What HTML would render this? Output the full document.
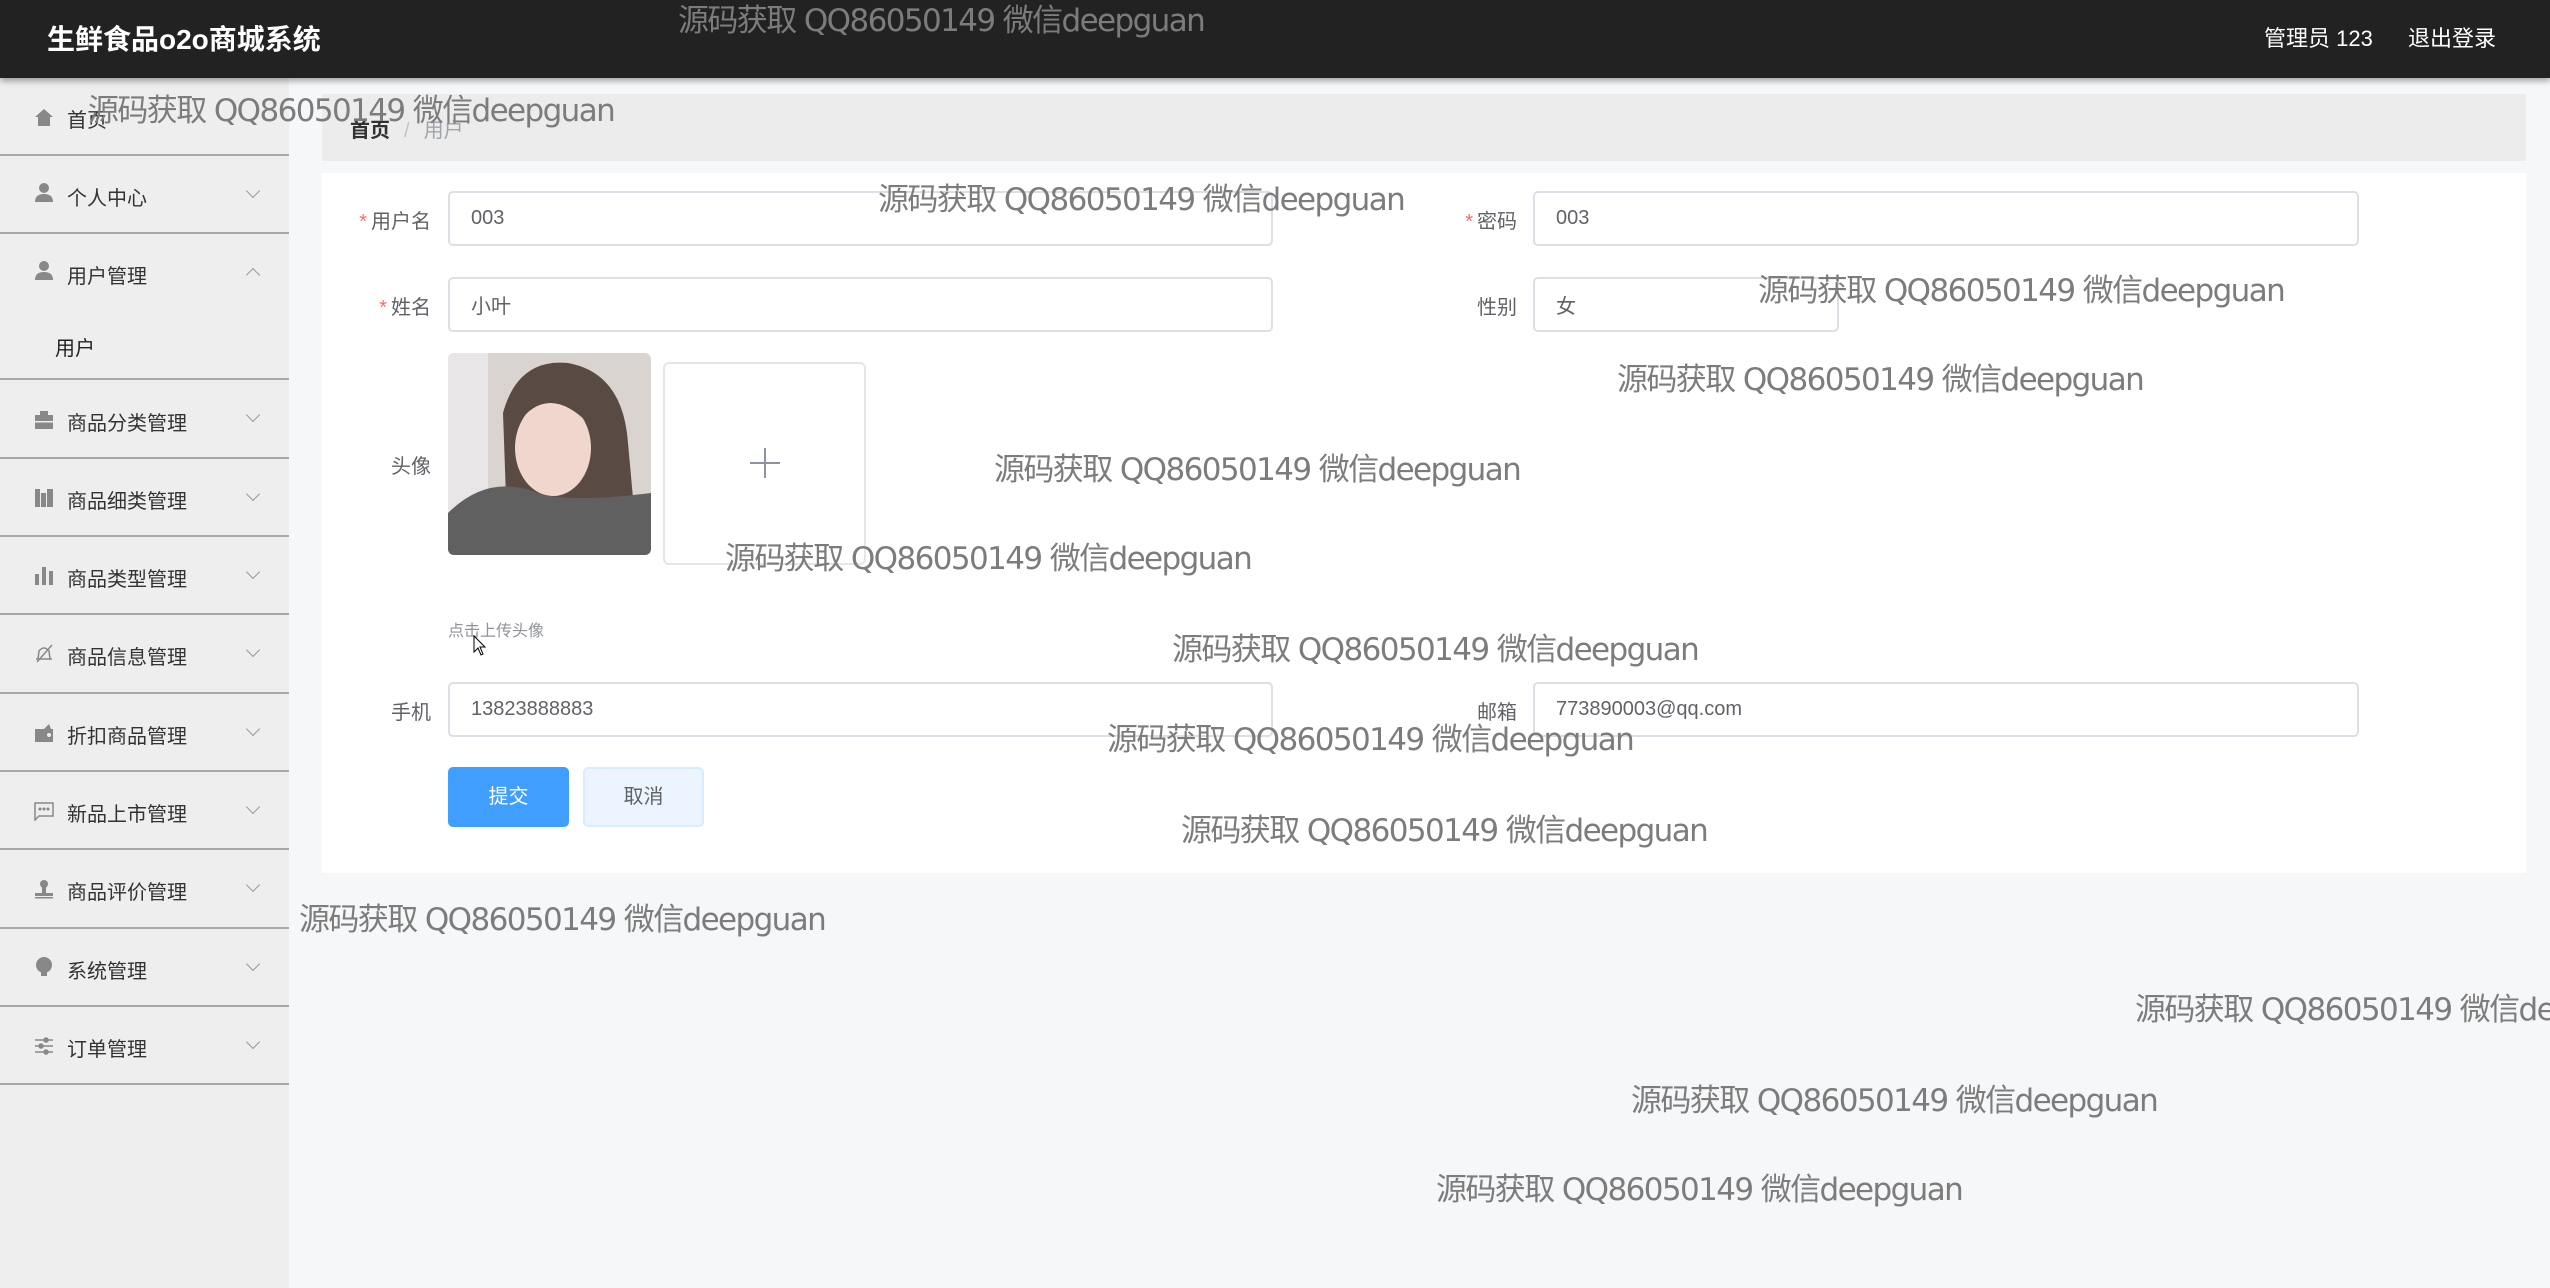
<!DOCTYPE html>
<html><head><meta charset="utf-8"><style>
*{margin:0;padding:0;box-sizing:border-box}
body{width:2550px;height:1288px;overflow:hidden;background:#f6f7f9;font-family:"Liberation Sans","Noto Sans CJK SC",sans-serif;position:relative;color:#606266}
.abs{position:absolute}
.hdr{left:0;top:0;width:2550px;height:78px;background:#222;box-shadow:0 3px 6px rgba(0,0,0,.35);z-index:2}
.side{left:0;top:78px;width:289px;height:1210px;background:#eee}
.item{position:absolute;left:0;width:289px;border-bottom:2px solid #a8a8a8;font-size:20px;color:#333}
.item .t{position:absolute;left:67px}
.item .ic{position:absolute;left:34px;width:20px;height:20px}
.item .ch{position:absolute;left:248px;width:10px;height:10px;border-right:1.5px solid #999;border-bottom:1.5px solid #999;transform:rotate(45deg)}
.lbl{position:absolute;font-size:20px;color:#606266;text-align:right}
.lbl b{color:#f56c6c;font-weight:normal;font-size:20px;margin-right:4px}
.inp{position:absolute;border:2px solid #dcdfe6;border-radius:5px;background:#fff;font-size:20px;color:#606266;padding-left:21px;display:flex;align-items:center}
.wm{position:absolute;font-size:31px;color:#7c7c7c;white-space:nowrap;z-index:5;font-family:"DejaVu Sans","Noto Sans CJK SC",sans-serif;letter-spacing:-1.6px;line-height:1}
</style></head><body>
<div class="abs hdr">
<div class="abs" style="left:47px;top:18px;font-size:28px;font-weight:bold;color:#fff">生鲜食品o2o商城系统</div>
<div class="abs" style="left:2264px;top:21px;font-size:22px;color:#fff">管理员 123</div>
<div class="abs" style="left:2408px;top:21px;font-size:22px;color:#fff">退出登录</div>
</div>
<div class="abs side"></div>
<div class="item" style="top:78px;height:78px"><svg class="ic" style="top:29px" viewBox="0 0 20 20"><path d="M10 2 L19 10 L16 10 L16 19 L4 19 L4 10 L1 10Z" fill="#888"/></svg><span class="t" style="top:26px">首页</span></div>
<div class="item" style="top:156px;height:78px"><svg class="ic" style="top:26px" viewBox="0 0 20 20"><circle cx="10" cy="6" r="5" fill="#888"/><path d="M1 20 Q1 12 10 12 Q19 12 19 20Z" fill="#888"/></svg><span class="t" style="top:26px">个人中心</span><i class="ch" style="top:30px"></i></div>
<div class="item" style="top:234px;height:146px"><svg class="ic" style="top:26px" viewBox="0 0 20 20"><circle cx="10" cy="6" r="5" fill="#888"/><path d="M1 20 Q1 12 10 12 Q19 12 19 20Z" fill="#888"/></svg><span class="t" style="top:26px">用户管理</span><i class="ch" style="top:36px;transform:rotate(225deg)"></i><span class="t" style="top:98px;left:55px;color:#222">用户</span></div>
<div class="item" style="top:380px;height:79px"><svg class="ic" style="top:30px" viewBox="0 0 20 20"><rect x="6" y="1" width="8" height="4" fill="#888"/><rect x="1" y="5" width="18" height="14" fill="#888"/><rect x="1" y="11" width="18" height="1.5" fill="#eee"/></svg><span class="t" style="top:27px">商品分类管理</span><i class="ch" style="top:30px"></i></div>
<div class="item" style="top:459px;height:78px"><svg class="ic" style="top:29px" viewBox="0 0 20 20"><rect x="1" y="1" width="5" height="18" fill="#888"/><rect x="7" y="5" width="5" height="14" fill="#888"/><rect x="13" y="1" width="6" height="18" fill="#888"/></svg><span class="t" style="top:26px">商品细类管理</span><i class="ch" style="top:30px"></i></div>
<div class="item" style="top:537px;height:78px"><svg class="ic" style="top:29px" viewBox="0 0 20 20"><rect x="1" y="8" width="4" height="11" fill="#888"/><rect x="8" y="1" width="4" height="18" fill="#888"/><rect x="15" y="5" width="4" height="14" fill="#888"/></svg><span class="t" style="top:26px">商品类型管理</span><i class="ch" style="top:30px"></i></div>
<div class="item" style="top:615px;height:79px"><svg class="ic" style="top:28px" viewBox="0 0 20 20" fill="none" stroke="#888" stroke-width="1.5"><path d="M4 16 L5 8 Q10 2 15 8 L16 16Z M2 16 H18 M3 19 L18 2"/></svg><span class="t" style="top:26px">商品信息管理</span><i class="ch" style="top:30px"></i></div>
<div class="item" style="top:694px;height:78px"><svg class="ic" style="top:29px" viewBox="0 0 20 20"><rect x="1" y="6" width="18" height="13" fill="#888"/><path d="M10 6 L15 1 L17 6Z" fill="#888"/><circle cx="15" cy="12" r="2" fill="#eee"/></svg><span class="t" style="top:26px">折扣商品管理</span><i class="ch" style="top:30px"></i></div>
<div class="item" style="top:772px;height:78px"><svg class="ic" style="top:29px" viewBox="0 0 20 20" fill="none" stroke="#888" stroke-width="1.5"><path d="M1 2 H19 V15 H5 L1 19Z"/><circle cx="6" cy="8" r=".8" fill="#888"/><circle cx="10" cy="8" r=".8" fill="#888"/><circle cx="14" cy="8" r=".8" fill="#888"/></svg><span class="t" style="top:26px">新品上市管理</span><i class="ch" style="top:30px"></i></div>
<div class="item" style="top:850px;height:79px"><svg class="ic" style="top:29px" viewBox="0 0 20 20"><circle cx="10" cy="5" r="4" fill="#888"/><rect x="8" y="8" width="4" height="6" fill="#888"/><rect x="1" y="14" width="18" height="3" fill="#888"/><rect x="1" y="18" width="18" height="1.5" fill="#888"/></svg><span class="t" style="top:26px">商品评价管理</span><i class="ch" style="top:30px"></i></div>
<div class="item" style="top:929px;height:78px"><svg class="ic" style="top:28px" viewBox="0 0 20 20"><circle cx="10" cy="8" r="8" fill="#888"/><rect x="7" y="15" width="6" height="4" fill="#888"/></svg><span class="t" style="top:26px">系统管理</span><i class="ch" style="top:30px"></i></div>
<div class="item" style="top:1007px;height:78px"><svg class="ic" style="top:29px" viewBox="0 0 20 20" stroke="#888" stroke-width="1.5"><path d="M1 4 H19 M1 10 H19 M1 16 H19"/><circle cx="12" cy="4" r="2" fill="#888"/><circle cx="7" cy="10" r="2" fill="#888"/><circle cx="12" cy="16" r="2" fill="#888"/></svg><span class="t" style="top:26px">订单管理</span><i class="ch" style="top:30px"></i></div>

<div class="abs" style="left:322px;top:94px;width:2204px;height:67px;background:#ececec"></div>
<div class="abs" style="left:350px;top:114px;font-size:20px;font-weight:bold;color:#303133">首页<span style="color:#c0c4cc;font-weight:normal;margin:0 14px">/</span><span style="color:#a0a4ac;font-weight:normal">用户</span></div>
<div class="abs" style="left:322px;top:173px;width:2204px;height:700px;background:#fff"></div>

<div class="lbl" style="left:340px;top:205px;width:91px"><b>*</b>用户名</div>
<div class="inp" style="left:448px;top:191px;width:825px;height:55px">003</div>
<div class="lbl" style="left:1420px;top:205px;width:97px"><b>*</b>密码</div>
<div class="inp" style="left:1533px;top:191px;width:826px;height:55px">003</div>

<div class="lbl" style="left:340px;top:291px;width:91px"><b>*</b>姓名</div>
<div class="inp" style="left:448px;top:277px;width:825px;height:55px">小叶</div>
<div class="lbl" style="left:1420px;top:291px;width:97px">性别</div>
<div class="inp" style="left:1533px;top:277px;width:306px;height:55px">女</div>

<div class="lbl" style="left:340px;top:450px;width:91px">头像</div>
<svg class="abs" style="left:448px;top:353px;border-radius:6px" width="203" height="202" viewBox="0 0 203 202">
<rect width="203" height="202" fill="#d9d4d0"/><rect width="40" height="202" fill="#e8e6e6"/>
<path d="M60 200 L55 60 Q70 5 120 10 Q175 20 180 90 L190 200Z" fill="#5a4a44"/>
<ellipse cx="105" cy="95" rx="38" ry="48" fill="#f0d6cc"/>
<path d="M70 70 Q100 30 140 70 L140 50 Q110 15 70 50Z" fill="#5a4a44"/>
<path d="M0 160 Q40 120 90 140 Q120 150 203 140 L203 202 L0 202Z" fill="#606060"/>
</svg>
<div class="abs" style="left:663px;top:362px;width:203px;height:203px;border:2px solid #e4e6ea;border-radius:6px;background:#fff"></div>
<div class="abs" style="left:750px;top:462px;width:30px;height:2px;background:#8c939d"></div>
<div class="abs" style="left:764px;top:448px;width:2px;height:30px;background:#8c939d"></div>
<div class="abs" style="left:448px;top:617px;font-size:16px;color:#909399">点击上传头像</div>
<svg class="abs" style="left:473px;top:635px" width="14" height="22" viewBox="0 0 14 22"><path d="M1 1 L1 17 L5 13 L8 20 L10 19 L7 12 L12 12Z" fill="#fff" stroke="#000"/></svg>

<div class="lbl" style="left:340px;top:696px;width:91px">手机</div>
<div class="inp" style="left:448px;top:682px;width:825px;height:55px">13823888883</div>
<div class="lbl" style="left:1420px;top:696px;width:97px">邮箱</div>
<div class="inp" style="left:1533px;top:682px;width:826px;height:55px">773890003@qq.com</div>

<div class="abs" style="left:448px;top:767px;width:121px;height:60px;background:#409eff;border-radius:5px;color:#fff;font-size:20px;text-align:center;line-height:60px">提交</div>
<div class="abs" style="left:583px;top:767px;width:121px;height:60px;background:#ecf5ff;border:2px solid #d9ecff;border-radius:5px;color:#606266;font-size:20px;text-align:center;line-height:56px">取消</div>

<div class="wm" style="left:678px;top:6px">源码获取 QQ86050149 微信deepguan</div>
<div class="wm" style="left:88px;top:96px">源码获取 QQ86050149 微信deepguan</div>
<div class="wm" style="left:878px;top:185px">源码获取 QQ86050149 微信deepguan</div>
<div class="wm" style="left:1758px;top:276px">源码获取 QQ86050149 微信deepguan</div>
<div class="wm" style="left:1617px;top:365px">源码获取 QQ86050149 微信deepguan</div>
<div class="wm" style="left:994px;top:455px">源码获取 QQ86050149 微信deepguan</div>
<div class="wm" style="left:725px;top:544px">源码获取 QQ86050149 微信deepguan</div>
<div class="wm" style="left:1172px;top:635px">源码获取 QQ86050149 微信deepguan</div>
<div class="wm" style="left:1107px;top:725px">源码获取 QQ86050149 微信deepguan</div>
<div class="wm" style="left:1181px;top:816px">源码获取 QQ86050149 微信deepguan</div>
<div class="wm" style="left:299px;top:905px">源码获取 QQ86050149 微信deepguan</div>
<div class="wm" style="left:2135px;top:995px">源码获取 QQ86050149 微信deepguan</div>
<div class="wm" style="left:1631px;top:1086px">源码获取 QQ86050149 微信deepguan</div>
<div class="wm" style="left:1436px;top:1175px">源码获取 QQ86050149 微信deepguan</div>
</body></html>
